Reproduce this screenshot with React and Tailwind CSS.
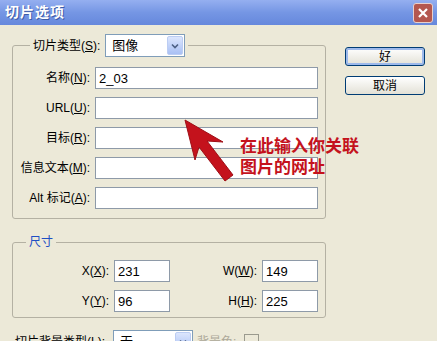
import React from "react";

const Field = ({ value = "", width = "w-[223px]" }) => (
  <div
    className={`${width} h-[22px] border border-[#8e9aa8] bg-white flex items-center pl-[3px] text-[13px] leading-none`}
  >
    {value}
  </div>
);

const Label = ({ text, accel, width = "w-[78px]" }) => (
  <div className={`${width} shrink-0 text-right whitespace-nowrap pr-[1px]`}>
    {text}(<u>{accel}</u>):
  </div>
);

const Combo = ({ value, width = "w-[80px]" }) => (
  <div
    className={`${width} h-[23px] border border-[#7f9db9] bg-white flex items-center pl-[6px] pr-[1px] text-[13px]`}
  >
    <span>{value}</span>
    <div className="ml-auto w-[16px] h-[19px] rounded-[2px] border border-[#bccdf3] bg-linear-to-b from-[#dce6fd] to-[#a9c0f4] flex items-center justify-center">
      <svg width="8" height="6" viewBox="0 0 8 6">
        <path d="M1 1.5 L4 4.5 L7 1.5" fill="none" stroke="#4d6185" strokeWidth="1.6" />
      </svg>
    </div>
  </div>
);

const Button = ({ children, primary }) => (
  <div
    className={`w-[80px] h-[19px] rounded-[3px] border border-[#003c74] bg-linear-to-b from-white to-[#e3e1d6] flex items-center justify-center text-[12px] ${
      primary ? "shadow-[inset_0_0_0_2px_#9db9eb]" : ""
    }`}
  >
    {children}
  </div>
);

const rows = [
  { text: "名称", accel: "N", value: "2_03" },
  { text: "URL", accel: "U", value: "" },
  { text: "目标", accel: "R", value: "" },
  { text: "信息文本", accel: "M", value: "" },
  { text: "Alt 标记", accel: "A", value: "" },
];

export default function App() {
  return (
    <div className="relative w-[437px] h-[341px] overflow-hidden flex flex-col bg-[#ece9d8] text-[12px] text-black font-['Liberation_Sans','Noto_Sans_CJK_SC',sans-serif]">
      {/* title bar */}
      <div className="h-[25px] shrink-0 flex items-center justify-between pl-[5px] pr-[4px] bg-linear-to-b from-[#95aff0] via-[#7596e4] to-[#6688dc]">
        <span className="text-white font-bold text-[14px] tracking-[1px] [text-shadow:1px_1px_0_#3d5ca8]">
          切片选项
        </span>
        <div className="w-[20px] h-[20px] rounded-[3px] border border-[#e8d0cc] bg-[#b4574f] flex items-center justify-center">
          <svg width="12" height="12" viewBox="0 0 12 12">
            <path d="M2 2 L10 10 M10 2 L2 10" stroke="white" strokeWidth="2.2" />
          </svg>
        </div>
      </div>

      <div className="flex flex-1">
        <div className="ml-[12px] w-[314px] pt-[9px] shrink-0">
          <fieldset className="border border-[#b4b1a3] rounded-[3px] pb-[9px]">
            <legend className="ml-[17px] px-[3px] flex items-center gap-[5px]">
              <span>
                切片类型(<u>S</u>):
              </span>
              <Combo value="图像" />
            </legend>
            <div className="flex flex-col gap-[8px] pt-[10px]">
              {rows.map((r) => (
                <div key={r.accel} className="flex items-center">
                  <Label text={r.text} accel={r.accel} />
                  <div className="ml-[4px]">
                    <Field value={r.value} />
                  </div>
                </div>
              ))}
            </div>
          </fieldset>

          <fieldset className="mt-[16px] border border-[#b4b1a3] rounded-[3px] pb-[5px]">
            <legend className="ml-[13px] px-[3px] leading-[14px] text-[#1f4fc4]">尺寸</legend>
            <div className="flex flex-col gap-[8px] pt-[11px]">
              <div className="flex items-center">
                <Label text="X" accel="X" width="w-[97px]" />
                <div className="ml-[4px]">
                  <Field value="231" width="w-[56px]" />
                </div>
                <Label text="W" accel="W" width="w-[88px]" />
                <div className="ml-[4px]">
                  <Field value="149" width="w-[56px]" />
                </div>
              </div>
              <div className="flex items-center">
                <Label text="Y" accel="Y" width="w-[97px]" />
                <div className="ml-[4px]">
                  <Field value="96" width="w-[56px]" />
                </div>
                <Label text="H" accel="H" width="w-[88px]" />
                <div className="ml-[4px]">
                  <Field value="225" width="w-[56px]" />
                </div>
              </div>
            </div>
          </fieldset>

          <div className="mt-[12px] flex items-center">
            <div className="ml-[3px] w-[96px] whitespace-nowrap">
              切片背景类型(<u>L</u>):
            </div>
            <div className="ml-[2px]">
              <Combo value="无" width="w-[80px]" />
            </div>
            <span className="ml-[4px] text-[#aca899]">背景色:</span>
            <div className="ml-[8px] w-[15px] h-[15px] border border-[#9a9a8e] bg-[#ece9d8]" />
          </div>
        </div>

        <div className="ml-[19px] pt-[22px] flex flex-col gap-[10px]">
          <Button primary>好</Button>
          <Button>取消</Button>
        </div>
      </div>

      {/* annotation overlay */}
      <svg
        className="absolute left-0 top-0 pointer-events-none"
        width="437"
        height="341"
        viewBox="0 0 437 341"
      >
        <polygon
          points="185,120 223,142 207,141 233,175 225,181 199,147 195,160"
          fill="#c4121c"
          stroke="#9e0e15"
          strokeWidth="1"
          strokeLinejoin="round"
        />
      </svg>
      <div className="absolute left-[240px] top-[135px] flex flex-col gap-[1px] text-[17px] leading-[20px] font-bold text-[#c4121c] font-['Noto_Sans_CJK_SC',sans-serif]">
        <span>在此输入你关联</span>
        <span>图片的网址</span>
      </div>
    </div>
  );
}
